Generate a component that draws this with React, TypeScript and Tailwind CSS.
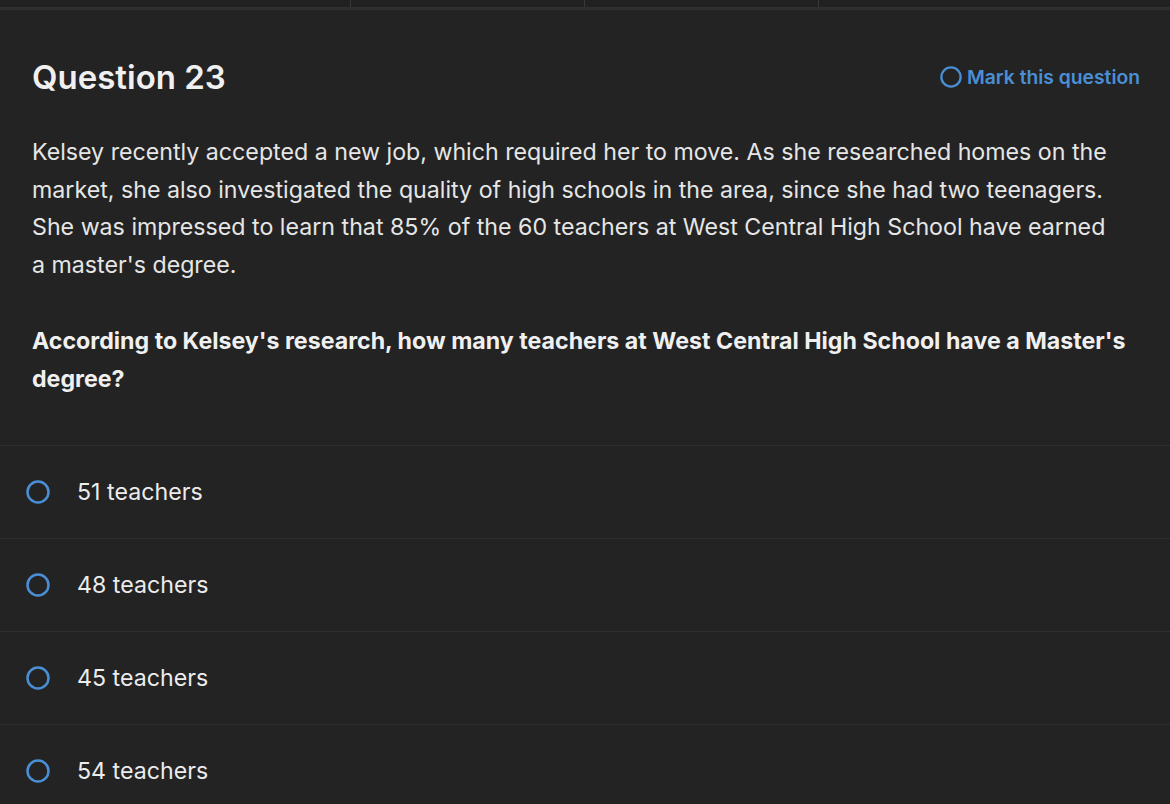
const options = ["51 teachers", "48 teachers", "45 teachers", "54 teachers"];

function Radio({ size = 24 }: { size?: number }) {
  return (
    <svg width={size} height={size} viewBox="0 0 24 24" className="shrink-0">
      <circle cx="12" cy="12" r="10.5" fill="none" stroke="#4a8fd6" strokeWidth="2.5" />
    </svg>
  );
}

export default function App() {
  return (
    <div
      className="min-h-[804px] w-[1170px] bg-[#232323] text-[#ececec]"
      style={{ fontFamily: "Inter, 'Open Sans', sans-serif" }}
    >
      {/* tab strip */}
      <div className="grid h-[8px] grid-cols-[351px_234px_234px_1fr] border-b border-[#303030] bg-[#212121]">
        <div className="border-r border-[#383838]" />
        <div className="border-r border-[#383838]" />
        <div className="border-r border-[#383838]" />
        <div />
      </div>
      <div className="h-[2px] bg-[#2e2e2e]" />

      <div className="pl-[32px] pr-[30px] pt-[47px] pb-[47px]">
        <div className="flex items-center justify-between">
          <h1 className="text-[33px] font-semibold leading-[40px] text-[#f0f0f0]">Question 23</h1>
          <button className="flex items-center gap-[5px] text-[19.3px] font-semibold text-[#4a8fd6]">
            <Radio size={22} />
            Mark this question
          </button>
        </div>

        <p className="mt-[37px] text-[23.2px] leading-[37.5px] text-[#e6e6e6]">
          Kelsey recently accepted a new job, which required her to move. As she researched homes on the
          market, she also investigated the quality of high schools in the area, since she had two teenagers.
          She was impressed to learn that 85% of the 60 teachers at West Central High School have earned
          <br />a master's degree.
        </p>

        <p className="mt-[39px] text-[23.2px] font-bold leading-[37.5px] text-[#f0f0f0]">
          According to Kelsey's research, how many teachers at West Central High School have a Master's
          degree?
        </p>
      </div>

      <div className="border-t border-[#2f2f2f]">
        {options.map((o) => (
          <div key={o} className="flex h-[93px] items-center gap-[27px] border-b border-[#2f2f2f] pl-[26px]">
            <Radio />
            <span className="text-[23.2px] text-[#ececec]">{o}</span>
          </div>
        ))}
      </div>
    </div>
  );
}
